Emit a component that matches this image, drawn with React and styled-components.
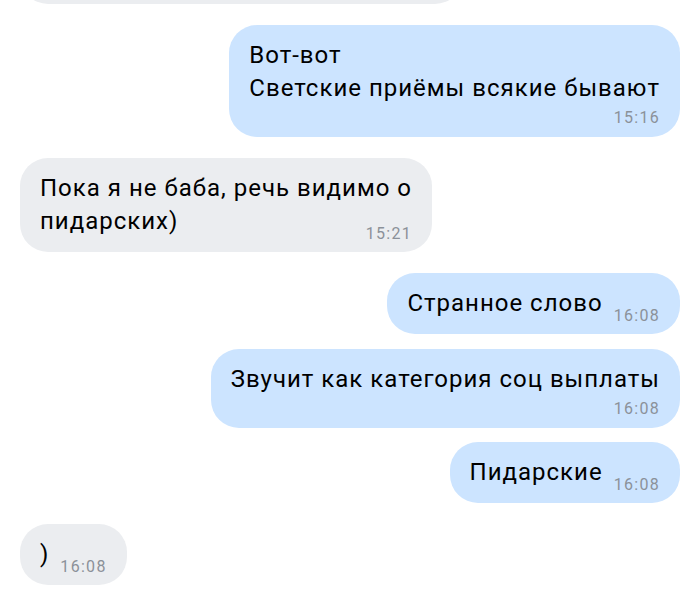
import styled, { createGlobalStyle, css } from "styled-components";

const GlobalStyle = createGlobalStyle`
    html, body {
        margin: 0;
        padding: 0;
        background: #ffffff;
    }
    body {
        font-family: Roboto, "Noto Sans", sans-serif;
        -webkit-font-smoothing: antialiased;
    }
`;

const Feed = styled.div`
    width: 700px;
    height: 596px;
    overflow: hidden;
    box-sizing: border-box;
    padding: 0 20px;
    display: flex;
    flex-direction: column;
`;

const Row = styled.div`
    display: flex;
    justify-content: ${(p) => (p.$out ? "flex-end" : "flex-start")};
    margin-top: ${(p) => p.$gap}px;
`;

const Bubble = styled.div`
    display: flex;
    flex-direction: column;
    box-sizing: border-box;
    padding: 14px 20px;
    border-radius: 28px;
    background: ${(p) => (p.$out ? "#cce4ff" : "#ebedf0")};
    color: #000000;
`;

const Stub = styled(Bubble)`
    width: 443px;
    height: 64px;
    margin-top: -60px;
`;

const Line = styled.div`
    font-size: 24px;
    line-height: 33px;
    letter-spacing: 1px;
    white-space: nowrap;
`;

const LastRow = styled.div`
    display: flex;
    align-items: flex-end;
    justify-content: space-between;
    gap: 11px;
`;

const Time = styled.span`
    font-size: 16px;
    line-height: 18px;
    letter-spacing: 1.3px;
    color: #8b9199;
    align-self: flex-end;

    ${(p) =>
        p.$inline
            ? css`
                  margin-bottom: -5px;
              `
            : css`
                  margin-top: 4px;
                  margin-bottom: -4px;
              `}
`;

const messages = [
    { out: true, gap: 21, lines: ["Вот-вот", "Светские приёмы всякие бывают"], time: "15:16", inline: false },
    { out: false, gap: 21, lines: ["Пока я не баба, речь видимо о", "пидарских)"], time: "15:21", inline: true },
    { out: true, gap: 21, lines: ["Странное слово"], time: "16:08", inline: true },
    { out: true, gap: 15, lines: ["Звучит как категория соц выплаты"], time: "16:08", inline: false },
    { out: true, gap: 14, lines: ["Пидарские"], time: "16:08", inline: true },
    { out: false, gap: 21, lines: [")"], time: "16:08", inline: true },
];

function Message({ out, lines, time, inline }) {
    const head = lines.slice(0, -1);
    const last = lines[lines.length - 1];

    return (
        <Bubble $out={out}>
            {head.map((line, index) => (
                <Line key={index}>{line}</Line>
            ))}
            <LastRow>
                <Line>{last}</Line>
                {inline && <Time $inline>{time}</Time>}
            </LastRow>
            {!inline && <Time>{time}</Time>}
        </Bubble>
    );
}

export default function App() {
    return (
        <>
            <GlobalStyle />
            <Feed>
                <Row $gap={0}>
                    <Stub />
                </Row>
                {messages.map((m, index) => (
                    <Row key={index} $out={m.out} $gap={m.gap}>
                        <Message {...m} />
                    </Row>
                ))}
            </Feed>
        </>
    );
}
